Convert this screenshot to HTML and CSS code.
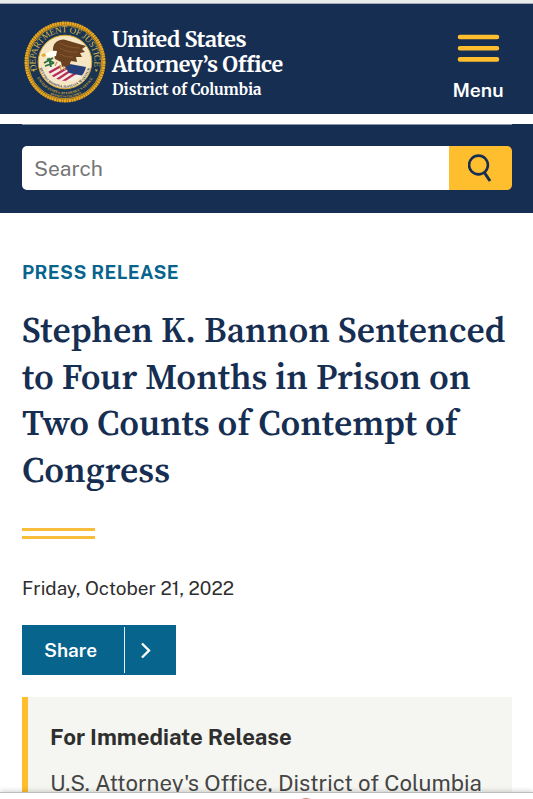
FILE: index.html
```html
<!DOCTYPE html>
<html lang="en">
<head>
  <meta charset="UTF-8">
  <meta name="viewport" content="width=device-width, initial-scale=1.0">
  <title>Stephen K. Bannon Sentenced to Four Months in Prison on Two Counts of Contempt of Congress</title>
  <link rel="stylesheet" href="styles.css">
</head>
<body>
  <header class="header">
    <a class="brand" href="#">
      <svg class="seal" viewBox="0 0 82 82" aria-hidden="true">
        <defs>
          <path id="arc-top" d="M12.8 49.5 A29.5 29.5 0 1 1 69.2 49.5"/>
          <path id="arc-motto" d="M15.6 45 A25.7 25.7 0 0 0 66.4 45"/>
          <path id="arc-office" d="M10.9 52.5 A32.2 32.2 0 0 0 71.1 52.5"/>
          <path id="arc-district" d="M21 70.2 A35.4 35.4 0 0 0 61 70.2"/>
          <clipPath id="shield"><path d="M23 48 L35 41 L62 46 Q59 60 43 60 Q29 60 23 48Z"/></clipPath>
        </defs>
        <circle cx="41" cy="41" r="40" fill="#8b5f16"/>
        <circle cx="41" cy="41" r="38.9" fill="none" stroke="#e9a922" stroke-width="3.2" stroke-dasharray="2 .5"/>
        <circle cx="41" cy="41" r="36.6" fill="#1a3554" stroke="#d9a62a" stroke-width=".8"/>
        <circle cx="41" cy="41" r="26.8" fill="#f6e6c4" stroke="#d9a62a" stroke-width="1"/>
        <g clip-path="url(#shield)">
          <path fill="#f5eee4" d="M20 40h44v24H20z"/>
          <path d="M21 54l16-9M26 57l19-11M31 60l18-12M38 61l14-9" stroke="#b92f58" stroke-width="2.2"/>
          <path fill="#263f78" d="M37 39L64 45 60 55 45 52z"/>
        </g>
        <path d="M20 42l9-5m-8 8l9-3m-5-5l2 9m-4-8l7 4" stroke="#287044" stroke-width="1.8"/>
        <path fill="#6a4220" d="M29 31 Q28 19 40 18.5 L62 25 58 28 61 31 56 32 58 36 52 36 53 41 47 40 45 45 38 46 37 41 31 38Z"/>
        <path d="M36 22q8 5 20 5M36 27q7 5 18 4M36 33q6 4 13 3" fill="none" stroke="#87582c" stroke-width="1"/>
        <path fill="#fffdf5" d="M33 30q-7-1-10 2l-4 1 1 2q7 2 12 0z"/>
        <path fill="#e3aa2a" d="M21 32l-4 2 2 2 3-1z"/>
        <path d="M33 41l-2 4m8 0l2 4m-5-5l1 5" stroke="#c9a142" stroke-width="1.3"/>
        <text class="seal-name"><textPath href="#arc-top" textLength="106">DEPARTMENT OF JUSTICE</textPath></text>
        <text class="seal-motto"><textPath href="#arc-motto" startOffset="2" textLength="68">QUI PRO DOMINA JUSTITIA SEQUITUR</textPath></text>
        <text class="seal-office"><textPath href="#arc-office" startOffset="5" textLength="67">UNITED STATES ATTORNEY'S OFFICE</textPath></text>
        <text class="seal-district"><textPath href="#arc-district" startOffset="6" textLength="32">DISTRICT OF COLUMBIA</textPath></text>
        <path fill="#d9a62a" d="M8 49l3-1-1 3zM71 48l3 1-2 2z"/>
      </svg>
      <span class="brand-text">
        <span class="brand-us">United States</span>
        <span class="brand-office">Attorney’s Office</span>
        <span class="brand-district">District of Columbia</span>
      </span>
    </a>
    <button class="menu" type="button">
      <svg width="43" height="29" viewBox="0 0 43 29" aria-hidden="true">
        <path d="M3 3H40M3 14.2H40M3 25.4H40" stroke="#ffbe2e" stroke-width="4.6" stroke-linecap="round"/>
      </svg>
      <span>Menu</span>
    </button>
  </header>

  <section class="search-bar">
    <form class="search">
      <input type="text" placeholder="Search" aria-label="Search">
      <button type="submit" aria-label="Search">
        <svg width="26" height="30" viewBox="0 0 26 30" aria-hidden="true">
          <circle cx="10.5" cy="12" r="9.4" fill="none" stroke="#162e51" stroke-width="2.6"/>
          <path d="M16 19L22 28" stroke="#162e51" stroke-width="3"/>
        </svg>
      </button>
    </form>
  </section>

  <main class="content">
    <p class="kicker">PRESS RELEASE</p>
    <h1>
      <span>Stephen K. Bannon Sentenced</span>
      <span>to Four Months in Prison on</span>
      <span>Two Counts of Contempt of</span>
      <span>Congress</span>
    </h1>
    <div class="rule"></div>
    <p class="date">Friday, October 21, 2022</p>
    <button class="share" type="button">
      <span class="share-label">Share</span>
      <span class="share-arrow">
        <svg width="12" height="17" viewBox="0 0 12 17" aria-hidden="true">
          <path d="M2 1.5L9 8.5L2 15.5" fill="none" stroke="#fff" stroke-width="2.4"/>
        </svg>
      </span>
    </button>
    <div class="release">
      <h2>For Immediate Release</h2>
      <p>U.S. Attorney's Office, District of Columbia</p>
    </div>
  </main>

  <!-- Top edge of the bottom toolbar -->
  <div class="toolbar"><span class="toolbar-icon"></span></div>
</body>
</html>
```
FILE: styles.css
```css
* {
  box-sizing: border-box;
}

body {
  margin: 0;
  height: 799px;
  overflow: hidden;
  border-top: 3px solid #e9eaea;
  background-color: #fff;
  color: #2e2e2e;
  font-family: "Public Sans", Inter, "Liberation Sans", sans-serif;
}

h1, h2, p {
  margin: 0;
}

button {
  padding: 0;
  border: 0;
  font-family: inherit;
}

.header {
  display: flex;
  justify-content: space-between;
  height: 111px;
  padding: 0 22px 0 24px;
  border-top: 1px solid #a4abb7;
  background-color: #162e51;
}

.brand {
  display: flex;
  gap: 6px;
  padding-top: 17px;
  color: #fff;
  text-decoration: none;
}

.seal {
  width: 82px;
  height: 82px;
}

.seal text {
  font-family: "Liberation Serif", serif;
}

.seal-name {
  fill: #d9b64e;
  font-size: 9px;
}

.seal-motto {
  fill: #2c3444;
  font-size: 3.4px;
  font-weight: bold;
}

.seal-office {
  fill: #dcae37;
  font-size: 3.5px;
  font-weight: bold;
}

.seal-district {
  fill: #dcae37;
  font-size: 2.8px;
  font-weight: bold;
}

.brand-text {
  display: flex;
  flex-direction: column;
  padding-top: 6px;
  font-family: Merriweather, "Liberation Serif", serif;
  font-weight: bold;
  white-space: nowrap;
}

.brand-us,
.brand-office {
  font-size: 21.5px;
  letter-spacing: -0.44px;
  line-height: 25px;
}

.brand-district {
  font-size: 15.1px;
  line-height: 26px;
}

.menu {
  display: flex;
  flex-direction: column;
  align-items: center;
  width: 66px;
  padding-top: 30px;
  background: none;
  color: #fff;
  font-size: 19.4px;
  font-weight: 600;
}

.menu span {
  margin-top: 15px;
  line-height: 24px;
}

.search-bar {
  height: 89px;
  margin-top: 10px;
  padding: 0 21px 0 22px;
  background-color: #162e51;
}

.search {
  display: flex;
  height: 66px;
  padding-top: 21px;
  border-top: 1px solid #8a96a8;
}

.search input {
  flex: 1;
  min-width: 0;
  padding: 0 12px;
  border: 0;
  border-radius: 5px 0 0 5px;
  font-family: inherit;
  font-size: 21px;
}

.search input::placeholder {
  color: #757575;
}

.search button {
  display: flex;
  align-items: center;
  justify-content: center;
  width: 63px;
  border-radius: 0 5px 5px 0;
  background-color: #ffbe2e;
}

.content {
  padding: 47px 21px 0 22px;
}

.kicker {
  color: #07648d;
  font-size: 18.6px;
  font-weight: 700;
  letter-spacing: 0.35px;
  line-height: 24px;
}

h1 {
  margin-top: 23px;
  color: #162e51;
  font-family: "Source Serif Pro", "Source Serif 4", "Liberation Serif", serif;
  font-size: 35.6px;
  font-weight: 600;
  line-height: 46.5px;
  white-space: nowrap;
}

h1 span {
  display: block;
}

.rule {
  width: 73px;
  height: 11px;
  margin-top: 35px;
  border-top: 3px solid #fabd3b;
  border-bottom: 3px solid #fabd3b;
}

.date {
  margin-top: 36px;
  font-size: 18.95px;
  line-height: 26px;
}

.share {
  display: flex;
  width: 154px;
  height: 50px;
  margin-top: 24px;
  padding: 2px 0;
  background-color: #07648d;
  color: #fff;
}

.share-label {
  width: 103px;
  padding-left: 22px;
  border-right: 1px solid #e5eff3;
  font-size: 19px;
  font-weight: 600;
  line-height: 46px;
  text-align: left;
}

.share-arrow {
  display: flex;
  align-items: center;
  padding-left: 15px;
}

.release {
  height: 110px;
  margin-top: 22px;
  padding: 26px 0 0 22px;
  border-left: 6px solid #ffbe2e;
  background-color: #f5f6f1;
  white-space: nowrap;
}

.release h2 {
  font-size: 22.2px;
  font-weight: 700;
  line-height: 28px;
}

.release p {
  margin-top: 17px;
  color: #454545;
  font-size: 22.2px;
  line-height: 30px;
}

.toolbar {
  position: fixed;
  right: 0;
  bottom: 0;
  left: 0;
  height: 7px;
  overflow: hidden;
  border-top: 1px solid #bcbcbc;
  background-color: #fff;
  box-shadow: 0 -1px 5px rgba(0, 0, 0, 0.18);
}

.toolbar-icon {
  display: block;
  width: 20px;
  height: 20px;
  margin: 5px 0 0 296px;
  border: 1px solid #c68478;
  border-radius: 50%;
}
```
